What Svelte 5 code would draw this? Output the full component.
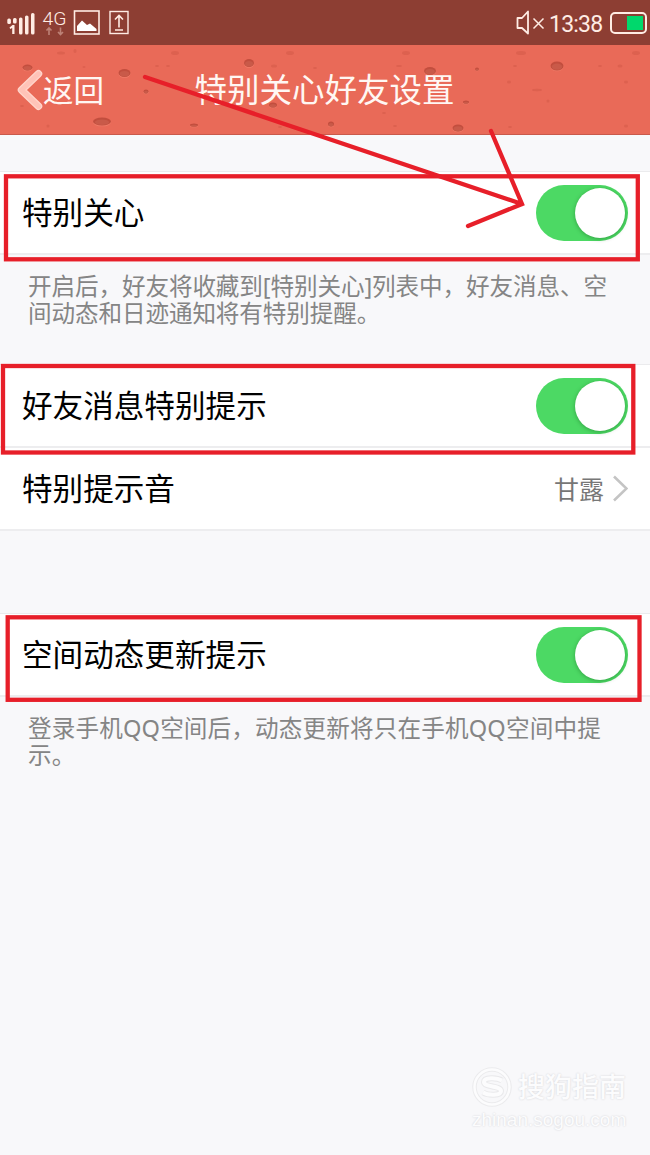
<script lang="ts">
	// Groups of the settings list, each with an optional hint below
	let groups = $state([
		{
			name: 'care',
			rows: [{ label: '特别关心', on: true, value: '' }],
			hint: ['开启后，好友将收藏到[特别关心]列表中，好友消息、空', '间动态和日迹通知将有特别提醒。']
		},
		{
			name: 'message',
			rows: [
				{ label: '好友消息特别提示', on: true, value: '' },
				{ label: '特别提示音', on: false, value: '甘露' }
			],
			hint: []
		},
		{
			name: 'space',
			rows: [{ label: '空间动态更新提示', on: true, value: '' }],
			hint: ['登录手机QQ空间后，动态更新将只在手机QQ空间中提', '示。']
		}
	]);

	// Spots of the header texture: x, y, rx, ry
	const spots = [
		[27.5, 22.5, 5, 3],
		[124.5, 28, 6, 4],
		[102, 76.5, 9, 4],
		[146, 46.5, 2.5, 2],
		[194, 80, 4, 1.5],
		[249, 18, 5, 4],
		[273, 60, 4, 2.5],
		[331, 79, 3, 2.5],
		[430, 26, 6, 4],
		[477, 24, 2, 1.5],
		[466, 57, 3, 1.5],
		[458, 83, 5.5, 3.5],
		[557, 21, 6.5, 4.5]
	];

	const specks = [
		[61, 8, 4, 1.5], [84, 22, 1.5, 1], [157, 21, 2, 1], [168, 21, 2, 1],
		[175, 8, 4, 2], [274, 21, 3, 1.5], [290, 8, 4, 2], [315, 23, 2, 1],
		[406, 8, 4, 2], [399, 21, 3, 1], [48, 81, 1.5, 1.5], [280, 82, 2, 1],
		[395, 81, 2, 1], [510, 82, 2, 1], [521, 8, 5, 2], [515, 21, 2, 1],
		[509, 37, 2, 1.5], [537, 45, 5, 1.2], [548, 56, 1.5, 1.5], [620, 21, 2.5, 1.5],
		[636, 8, 4, 2], [626, 37, 2, 1.5], [626, 81, 2, 1.5], [22, 61, 2, 1],
		[210, 45, 2, 1], [384, 68, 2, 1], [75, 6, 1.5, 2], [600, 21, 2, 1]
	];
</script>

<div class="screen">
	<div class="status-bar">
		<svg class="status-left" width="140" height="45" viewBox="0 0 140 45">
			<g fill="#ffece4">
				<rect x="7.3" y="18.5" width="3.6" height="5.5" rx="1.5" />
				<rect x="13" y="18" width="3.6" height="5.500" rx="1.5" />
				<path d="M9.500 27.500l3-2.500h2v9h-2.300v-6l-2 1z" />
				<rect x="19" y="17.500" width="3.500" height="17" rx="1.6" />
				<rect x="25" y="15.500" width="3.500" height="19" rx="1.6" />
				<rect x="31" y="13" width="3.500" height="21.500" rx="1.6" />
			</g>
			<text x="42.5" y="25" class="network" textLength="24" lengthAdjust="spacingAndGlyphs">4G</text>
			<path d="M49 35v-7M46.5 30.5L49 28l2.5 2.5M60.5 27.500v7M58 32l2.500 2.500L63 32" fill="none" stroke="#bd8277" stroke-width="1.6" />
			<rect x="74.500" y="11" width="24.500" height="23" fill="none" stroke="#ffece4" stroke-width="1.6" />
			<path d="M77 31v-5l5-5.500 5 4.500 3-1.500 6.500 5.500V31z" fill="#fff" />
			<rect x="110" y="11.500" width="18" height="22" fill="none" stroke="#ffece4" stroke-width="1.4" />
			<path d="M119 27.500V16M115 19.500l4-4 4 4M115 30h8" fill="none" stroke="#ffece4" stroke-width="1.6" />
		</svg>
		<div class="status-right">
			<svg width="31" height="28" viewBox="0 0 31 28">
				<path d="M13 2.500v22L7 19H2.500V9H7z" fill="none" stroke="#ffece4" stroke-width="1.8" stroke-linejoin="round" />
				<path d="M18.500 9.500l10 10M28.500 9.500l-10 10" stroke="#ffece4" stroke-width="1.5" />
			</svg>
			<span class="clock">13:38</span>
			<span class="battery"><span class="charge"></span></span>
		</div>
	</div>

	<header>
		<svg class="texture" width="650" height="90" viewBox="0 0 650 90">
			{#each spots as [x, y, rx, ry]}
				<ellipse cx={x} cy={y + 0.8} {rx} {ry} fill="#f07d69" />
				<ellipse cx={x} cy={y} {rx} {ry} fill="#c24e3e" />
				<ellipse cx={x} cy={y + 0.7} rx={rx * 0.8} ry={ry * 0.7} fill="#c95a49" />
			{/each}
			{#each specks as [x, y, rx, ry]}
				<ellipse cx={x} cy={y} {rx} {ry} fill="#d45948" opacity="0.55" />
			{/each}
		</svg>
		<button class="back">
			<svg width="27" height="42" viewBox="0 0 27 42">
				<path d="M22.500 4.800L5.500 21l17 16.200" fill="none" stroke="#ffd5cb" stroke-width="7.500" stroke-linecap="round" stroke-linejoin="round" />
				<path d="M22.500 4.800L5.500 21l17 16.200" fill="none" stroke="#ffc3b8" stroke-width="5" stroke-linecap="round" stroke-linejoin="round" />
			</svg>
			<span>返回</span>
		</button>
		<h1>特别关心好友设置</h1>
	</header>

	<main>
		{#each groups as group}
			<section class={group.name}>
				<div class="rows">
					{#each group.rows as row}
						<div class="row">
							<span class="label">{row.label}</span>
							{#if row.value}
								<span class="value">{row.value}</span>
								<svg width="16" height="27" viewBox="0 0 16 27">
									<path d="M2 1.500l12.500 12-12.500 12" fill="none" stroke="#c4c4c4" stroke-width="2.600" />
								</svg>
							{:else}
								<button class="switch" class:on={row.on} aria-label={row.label} onclick={() => (row.on = !row.on)}>
									<span class="knob"></span>
								</button>
							{/if}
						</div>
					{/each}
				</div>
				{#if group.hint.length}
					<p class="hint">
						{#each group.hint as line}
							<span>{line}</span>
						{/each}
					</p>
				{/if}
			</section>
		{/each}
	</main>

	<!-- Red marks drawn over the page -->
	<svg class="marks" width="650" height="1155" viewBox="0 0 650 1155">
		<rect x="6" y="176.300" width="631.800" height="83" />
		<rect x="3" y="366" width="630.300" height="86.500" />
		<rect x="7.700" y="617.300" width="631.800" height="82.500" />
		<path d="M145 77L522 204M491 131L522 204L468 226" stroke-linecap="round" />
	</svg>

	<div class="watermark">
		<svg width="40" height="40" viewBox="0 0 40 40">
			<circle cx="20" cy="20" r="17.500" fill="none" stroke="#ebebed" stroke-width="4.500" />
			<circle cx="20" cy="20" r="17.500" fill="none" stroke="#fcfcfd" stroke-width="2.500" />
			<path d="M30 13.500c-5-3-18-3.500-18 1.500 0 5.500 17 3.500 17 9 0 5-13 4.500-18 1.500" fill="none" stroke="#e9e9eb" stroke-width="6" />
			<path d="M30 13.500c-5-3-18-3.500-18 1.500 0 5.500 17 3.500 17 9 0 5-13 4.500-18 1.500" fill="none" stroke="#fcfcfd" stroke-width="4" />
		</svg>
		<span class="brand">搜狗指南</span>
		<span class="site">zhinan.sogou.com</span>
	</div>
</div>

<style>
	:global(body) {
		background: #f8f8fa;
	}

	.screen {
		position: relative;
		width: 650px;
		height: 1155px;
		overflow: hidden;
		background: #f8f8fa;
		font-family: 'Noto Sans', 'Noto Sans CJK SC', sans-serif;
	}

	button {
		padding: 0;
		border: none;
		background: none;
		font-family: inherit;
		cursor: pointer;
	}

	/* Status bar */
	.status-bar {
		display: flex;
		justify-content: space-between;
		height: 45px;
		background: #8d3e33;
	}

	.network {
		font-family: Roboto, sans-serif;
		font-size: 18.5px;
		font-weight: 300;
		fill: #ffece4;
	}

	.status-right {
		display: flex;
		align-items: center;
		padding-right: 3px;
	}

	.clock {
		box-sizing: border-box;
		width: 54px;
		height: 45px;
		margin-left: 3px;
		padding-top: 3px;
		font-family: Roboto, sans-serif;
		font-size: 23px;
		letter-spacing: -0.8px;
		line-height: 43px;
		color: #ffece4;
	}

	.battery {
		display: flex;
		justify-content: flex-end;
		box-sizing: border-box;
		width: 37px;
		height: 22px;
		margin-left: 7px;
		padding: 2px 2.5px;
		border: 2px solid #ffece4;
		border-radius: 5px;
	}

	.charge {
		width: 16px;
		background: #00d86c;
	}

	/* Header */
	header {
		position: relative;
		display: flex;
		align-items: center;
		box-sizing: border-box;
		height: 90px;
		border-bottom: 1px solid #c95a4b;
		background: #e96a58;
		color: #fff7f3;
	}

	.texture {
		position: absolute;
		top: 0;
		left: 0;
	}

	.back {
		position: relative;
		display: flex;
		align-items: center;
		box-sizing: border-box;
		width: 179px;
		padding-left: 16px;
		color: inherit;
		font-size: 30.5px;
		line-height: 44px;
	}

	h1 {
		position: relative;
		margin: 0 0 0 15.5px;
		font-size: 32.5px;
		font-weight: 400;
		line-height: 48px;
		white-space: nowrap;
	}

	/* Settings list */
	main {
		padding-top: 36px;
	}

	.rows {
		border-top: 1px solid #ebebed;
		border-bottom: 2px solid #ededef;
		background: #fff;
	}

	.row {
		display: flex;
		align-items: center;
		box-sizing: border-box;
		height: 81px;
		padding: 0 22px;
		color: #000;
	}

	.row + .row {
		border-top: 2px solid #ededef;
		height: 83px;
	}

	.label {
		flex: 1;
		padding-bottom: 2px;
		font-size: 30.6px;
		line-height: 44px;
	}

	.value {
		margin-right: 8px;
		padding-bottom: 2px;
		font-size: 25px;
		color: #777;
	}

	.switch {
		display: flex;
		justify-content: flex-start;
		box-sizing: border-box;
		width: 92px;
		height: 56px;
		padding: 3px;
		border-radius: 28px;
		background: #ddd;
	}

	.switch.on {
		justify-content: flex-end;
		background: #4cd964;
	}

	.knob {
		width: 50px;
		height: 50px;
		border-radius: 50%;
		background: #fff;
		box-shadow: 0 1px 4px rgba(0, 60, 10, 0.35);
	}

	.hint {
		margin: 0;
		padding: 18px 0 0 28px;
		font-size: 23.6px;
		line-height: 27px;
		color: #858585;
	}

	.hint span {
		display: block;
		white-space: nowrap;
	}

	.care {
		height: 193px;
	}

	.care .hint {
		letter-spacing: -0.11px;
	}

	.message {
		height: 249px;
	}

	.space .hint {
		letter-spacing: 0.15px;
	}

	/* Overlays */
	.marks {
		position: absolute;
		top: 0;
		left: 0;
		fill: none;
		stroke: #e71f29;
		stroke-width: 4.3;
		pointer-events: none;
	}

	.watermark {
		position: absolute;
		left: 472px;
		top: 1067px;
		display: grid;
		grid-template-columns: 40px auto;
		column-gap: 6px;
		align-items: center;
		color: #fcfcfd;
		text-shadow: 0 0 2px #cfcfd3;
	}

	.brand {
		font-size: 27px;
		font-weight: 500;
		line-height: 40px;
	}

	.site {
		grid-column: 1 / 3;
		font-family: 'Liberation Sans', sans-serif;
		font-size: 19px;
		line-height: 26px;
	}
</style>
